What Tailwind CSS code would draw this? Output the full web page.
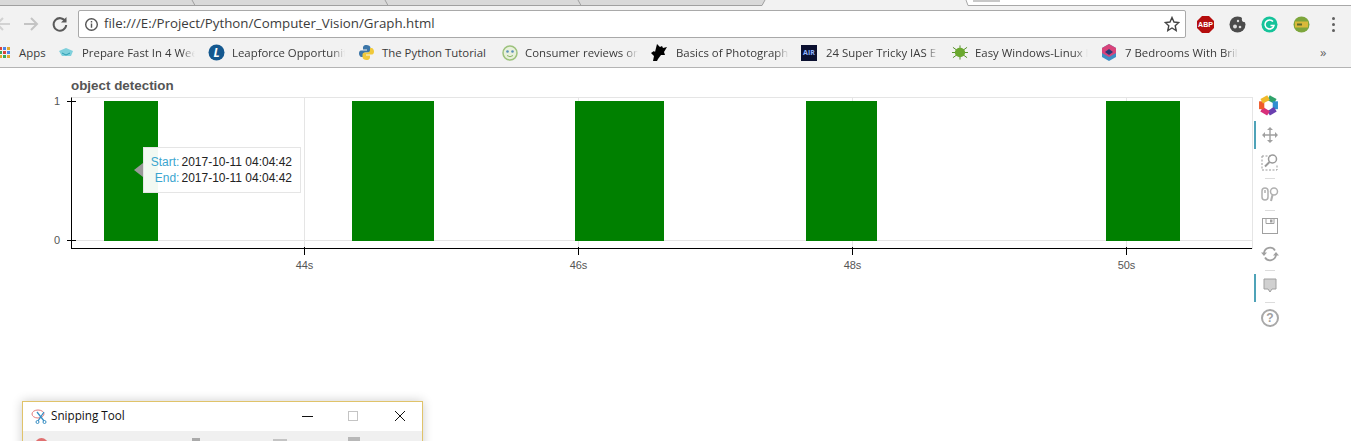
<!DOCTYPE html>
<html lang="en">
<head>
<meta charset="UTF-8">
<title>Graph</title>
<script src="https://cdn.jsdelivr.net/npm/@tailwindcss/browser@4"></script>
</head>
<body class="relative w-[1351px] h-[441px] overflow-hidden bg-white font-['Liberation_Sans',sans-serif]">

<!-- tab strip -->
<div class="relative h-[6px] bg-[#f2f2f2]">
  <svg class="absolute left-0 top-0 w-[1351px] h-[6px]" viewBox="0 0 1351 6" fill="none">
    <path d="M0 0H765L762 5.500H0z" fill="#d9d9d9"/>
    <path d="M762 5.500H0M765 0l-3 5.500M192 0l3 5.500M385 0l3 5.500M578 0l3 5.500" stroke="#a0a0a0"/>
    <path d="M966 0l2 5.500H1351V0z" fill="#fff"/>
    <path d="M966 0l2 5.500H1351" stroke="#a8a8a8"/>
    <rect x="973" y="0" width="27" height="2" fill="#c8c8c8"/>
  </svg>
</div>

<!-- toolbar -->
<div class="flex items-center h-[32px] pt-[4px] bg-[#f2f2f2]">
  <svg class="ml-[-6px] w-[18px] h-[18px] shrink-0" viewBox="0 0 18 18" fill="none" stroke="#d2d2d2" stroke-width="2"><path d="M16 9H3M9 3 3 9l6 6"/></svg>
  <svg class="ml-[10px] w-[18px] h-[18px] shrink-0" viewBox="0 0 18 18" fill="none" stroke="#c4c4c4" stroke-width="2"><path d="M2 9h13M9 3l6 6-6 6"/></svg>
  <svg class="ml-[11px] w-[18px] h-[18px] shrink-0" viewBox="0 0 18 18" fill="none" stroke="#5a5a5a" stroke-width="2"><path d="M14.500 6.500A6.300 6.300 0 1 0 15.200 10"/><path d="M15.500 2v5.500h-5.500" fill="#5a5a5a" stroke="none"/></svg>
  <div class="ml-[9px] flex items-center w-[1108px] h-[28px] bg-white border border-[#a9a9a9] rounded-[2px]">
    <svg class="ml-[5px] w-[15px] h-[15px] shrink-0" viewBox="0 0 16 16" fill="none" stroke="#555" stroke-width="1.500"><circle cx="8" cy="8" r="6.200"/><path d="M8 7v4.500M8 4.200v1.600"/></svg>
    <span class="ml-[5px] text-[13.300px] text-[#3c3c3c] font-['Open_Sans',sans-serif] whitespace-nowrap">file:///E:/Project/Python/Computer_Vision/Graph.html</span>
    <svg class="ml-auto mr-[5px] w-[16px] h-[16px] shrink-0" viewBox="0 0 16 16" fill="none" stroke="#444" stroke-width="1.400"><path d="M8 1.500 10 6l4.800.5-3.600 3.200 1 4.800L8 12l-4.200 2.500 1-4.800L1.200 6.500 6 6z"/></svg>
  </div>
  <svg class="ml-[11px] w-[17px] h-[17px] shrink-0" viewBox="0 0 17 17"><path d="M5 0h7l5 5v7l-5 5H5l-5-5V5z" fill="#b50d0d"/><text x="8.500" y="11" font-size="7" font-weight="700" fill="#fff" text-anchor="middle">ABP</text></svg>
  <svg class="ml-[15px] w-[17px] h-[17px] shrink-0" viewBox="0 0 17 17"><circle cx="8.500" cy="8.500" r="8" fill="#4c4c4c"/><circle cx="6" cy="10.500" r="2" fill="#ddd"/><circle cx="11" cy="11" r="1.300" fill="#ddd"/><circle cx="9" cy="5" r="1.200" fill="#ddd"/><circle cx="16" cy="3" r="3.200" fill="#f2f2f2"/></svg>
  <svg class="ml-[15px] w-[17px] h-[17px] shrink-0" viewBox="0 0 17 17" fill="none"><circle cx="8.500" cy="8.500" r="8" fill="#15c39a"/><path d="M12 5.500A4.500 4.500 0 1 0 13 9.500H9.500" stroke="#fff" stroke-width="1.500"/></svg>
  <svg class="ml-[15px] w-[17px] h-[17px] shrink-0" viewBox="0 0 17 17"><circle cx="8.500" cy="8.500" r="8" fill="#7da63c"/><rect x="2" y="5.500" width="13" height="6" fill="#d9b93a"/><rect x="4" y="7.500" width="5" height="2" fill="#5c6b2c"/></svg>
  <div class="ml-[22px] flex flex-col gap-[3px]"><i class="w-[3px] h-[3px] rounded-full bg-[#606060]"></i><i class="w-[3px] h-[3px] rounded-full bg-[#606060]"></i><i class="w-[3px] h-[3px] rounded-full bg-[#606060]"></i></div>
</div>

<!-- bookmarks -->
<div class="flex items-center h-[30px] bg-[#f2f2f2] border-b border-[#b4b4b4] text-[11.400px] text-[#3a3a3a] font-['Open_Sans',sans-serif] whitespace-nowrap">
  <div class="ml-[-1px] grid grid-cols-3 gap-px w-[11px] shrink-0">
    <i class="h-[3px] bg-[#d9453a]"></i><i class="h-[3px] bg-[#4b84e8]"></i><i class="h-[3px] bg-[#e0a92e]"></i>
    <i class="h-[3px] bg-[#3aa757]"></i><i class="h-[3px] bg-[#d9453a]"></i><i class="h-[3px] bg-[#4b84e8]"></i>
    <i class="h-[3px] bg-[#e0a92e]"></i><i class="h-[3px] bg-[#3aa757]"></i><i class="h-[3px] bg-[#e0a92e]"></i>
  </div>
  <span class="ml-[9px] w-[39px] shrink-0">Apps</span>
  <svg class="w-[16px] h-[16px] shrink-0" viewBox="0 0 16 16"><path d="M1 6 8 3l7 3-2 5H4z" fill="#7fd0dc"/><path d="M4 8l4 2 4-2" fill="none" stroke="#2b9db3"/></svg>
  <span class="ml-[8px] w-[113px] shrink-0 [mask-image:linear-gradient(to_right,black_88%,transparent)]">Prepare Fast In 4 Wee</span>
  <svg class="ml-[13px] w-[17px] h-[17px] shrink-0" viewBox="0 0 17 17"><circle cx="8.500" cy="8.500" r="8" fill="#14588f"/><text x="8.500" y="13" font-size="12" font-weight="700" font-style="italic" fill="#fff" text-anchor="middle">L</text></svg>
  <span class="ml-[7px] w-[113px] shrink-0 [mask-image:linear-gradient(to_right,black_88%,transparent)]">Leapforce Opportunit</span>
  <svg class="ml-[13px] w-[17px] h-[17px] shrink-0" viewBox="0 0 17 17"><path d="M8.500 1C5.500 1 5 2.500 5 4v1.500h4V6.500H3C1.500 6.500 1 8 1 9.500S2 13 3.500 13H5v-2c0-1.500 1-2.500 2.500-2.500h3c1 0 2-1 2-2V4c0-2-2-3-4-3z" fill="#3c76a8"/><path d="M8.500 16c3 0 3.500-1.500 3.500-3v-1.500H8v-1h6c1.500 0 2-1.500 2-3s-1-3.500-2.500-3.500H12v2c0 1.500-1 2.500-2.500 2.500h-3c-1 0-2 1-2 2V13c0 2 2 3 4 3z" fill="#f0c93a"/></svg>
  <span class="ml-[7px] w-[104px] shrink-0">The Python Tutorial</span>
  <svg class="ml-[16px] w-[16px] h-[16px] shrink-0" viewBox="0 0 16 16" fill="none"><circle cx="8" cy="8" r="7" fill="#e8f0dc" stroke="#9cc27c" stroke-width="1.500"/><circle cx="5.500" cy="6.500" r="1.300" fill="#5a8fb8"/><circle cx="10.500" cy="6.500" r="1.300" fill="#5a8fb8"/><path d="M5 10.500q3 2.500 6 0" stroke="#8bb56c"/></svg>
  <span class="ml-[7px] w-[113px] shrink-0 [mask-image:linear-gradient(to_right,black_88%,transparent)]">Consumer reviews on</span>
  <svg class="ml-[13px] w-[17px] h-[17px] shrink-0" viewBox="0 0 17 17"><path d="M6 0l3 3 2-1 1 2 4-1-3 5 1 3-4 0-3 4-1 2H2l1-5-3-3 3-2 1 1z" fill="#000"/></svg>
  <span class="ml-[8px] w-[113px] shrink-0 [mask-image:linear-gradient(to_right,black_88%,transparent)]">Basics of Photograph</span>
  <div class="ml-[12px] flex items-center justify-center w-[16px] h-[16px] shrink-0 bg-[#0b1030] text-[7px] font-bold text-[#8fb4ff] leading-none">AIR</div>
  <span class="ml-[9px] w-[113px] shrink-0 [mask-image:linear-gradient(to_right,black_88%,transparent)]">24 Super Tricky IAS E</span>
  <svg class="ml-[13px] w-[16px] h-[17px] shrink-0" viewBox="0 0 17 17"><g stroke="#4e8c22"><path d="M1 3l15 11M16 3 1 14M0 8.500h17M8.500 1v15"/></g><ellipse cx="8.500" cy="8.500" rx="5.500" ry="5" fill="#6aa82e"/></svg>
  <span class="ml-[7px] w-[113px] shrink-0 [mask-image:linear-gradient(to_right,black_88%,transparent)]">Easy Windows-Linux I</span>
  <svg class="ml-[13px] w-[16px] h-[17px] shrink-0" viewBox="0 0 16 17"><path d="M8 0l7 4v9l-7 4-7-4V4z" fill="#3f8fc4"/><path d="M8 0l7 4v5L8 13 1 9V4z" fill="#d8437a"/><path d="M8 5l4 3-4 3-4-3z" fill="#283a78"/></svg>
  <span class="ml-[8px] w-[113px] shrink-0 [mask-image:linear-gradient(to_right,black_88%,transparent)]">7 Bedrooms With Bril</span>
  <span class="ml-[82px] text-[13px] text-[#666]">»</span>
</div>

<!-- plot -->
<div class="relative h-[373px]">
  <div class="absolute left-[71px] top-[9px] text-[13.400px] font-bold text-[#555] leading-[18px]">object detection</div>

  <!-- plot frame -->
  <div class="absolute left-[71px] top-[29px] w-[1181px] h-[152px] border-l border-b border-l-black border-b-black border-t border-t-[#e5e5e5]"></div>
  <div class="absolute left-[72px] top-[172px] w-[1180px] h-px bg-[#e5e5e5]"></div>
  <div class="absolute left-[304px] top-[30px] w-px h-[150px] bg-[#e5e5e5]"></div>
  <div class="absolute left-[578px] top-[30px] w-px h-[150px] bg-[#e5e5e5]"></div>
  <div class="absolute left-[852px] top-[30px] w-px h-[150px] bg-[#e5e5e5]"></div>
  <div class="absolute left-[1126px] top-[30px] w-px h-[150px] bg-[#e5e5e5]"></div>
  <div class="absolute left-[1252px] top-[29px] w-px h-[152px] bg-[#e5e5e5]"></div>

  <!-- bars -->
  <div class="absolute left-[104px] top-[33px] w-[54px] h-[140px] bg-[#008000]"></div>
  <div class="absolute left-[352px] top-[33px] w-[82px] h-[140px] bg-[#008000]"></div>
  <div class="absolute left-[575px] top-[33px] w-[89px] h-[140px] bg-[#008000]"></div>
  <div class="absolute left-[806px] top-[33px] w-[71px] h-[140px] bg-[#008000]"></div>
  <div class="absolute left-[1106px] top-[33px] w-[74px] h-[140px] bg-[#008000]"></div>

  <!-- y ticks -->
  <div class="absolute left-[67px] top-[33px] w-[9px] h-px bg-black"></div>
  <div class="absolute left-[67px] top-[172px] w-[9px] h-px bg-black"></div>
  <div class="absolute left-[48px] top-[27px] w-[12px] text-right text-[11px] leading-[13px] text-[#555]">1</div>
  <div class="absolute left-[48px] top-[166px] w-[12px] text-right text-[11px] leading-[13px] text-[#555]">0</div>

  <!-- x ticks -->
  <div class="absolute left-[304px] top-[179px] w-px h-[8px] bg-black"></div>
  <div class="absolute left-[578px] top-[179px] w-px h-[8px] bg-black"></div>
  <div class="absolute left-[852px] top-[179px] w-px h-[8px] bg-black"></div>
  <div class="absolute left-[1126px] top-[179px] w-px h-[8px] bg-black"></div>
  <div class="absolute left-[284px] top-[191px] w-[41px] text-center text-[11px] leading-[13px] text-[#555]">44s</div>
  <div class="absolute left-[558px] top-[191px] w-[41px] text-center text-[11px] leading-[13px] text-[#555]">46s</div>
  <div class="absolute left-[832px] top-[191px] w-[41px] text-center text-[11px] leading-[13px] text-[#555]">48s</div>
  <div class="absolute left-[1106px] top-[191px] w-[41px] text-center text-[11px] leading-[13px] text-[#555]">50s</div>

  <!-- hover tooltip -->
  <div class="absolute left-[134px] top-[95px] w-0 h-0 border-y-[7px] border-y-transparent border-r-[9px] border-r-[#9a9a9a]"></div>
  <div class="absolute left-[143px] top-[79px] w-[158px] h-[46px] bg-white/95 border border-[#e5e5e5] pt-[6px] pr-[8px] text-[12px] leading-[16px] grid grid-cols-[auto_auto] justify-end content-start gap-x-[2px]">
    <span class="text-right text-[#3ba5cf]">Start:</span><span class="text-[#222]">2017-10-11 04:04:42</span>
    <span class="text-right text-[#3ba5cf]">End:</span><span class="text-[#222]">2017-10-11 04:04:42</span>
  </div>

  <!-- bokeh toolbar -->
  <div class="absolute left-[1254px] top-[27px] w-[32px] flex flex-col items-center">
    <svg class="mr-[4px] w-[21px] h-[21px]" viewBox="0 0 20 20" fill="none" stroke-width="5"><path d="M10 2.500 16.500 6" stroke="#2fa36a"/><path d="M16.500 6V13.500" stroke="#2f8fd0"/><path d="M16.500 13.500 10 17.500" stroke="#6a3fb0"/><path d="M10 17.500 3.500 13.500" stroke="#d8307a"/><path d="M3.500 13.500V6" stroke="#ef5a2a"/><path d="M3.500 6 10 2.500" stroke="#f0b92a"/></svg>
    <div class="relative mt-[5px] flex items-center justify-center w-[32px] h-[28px] pb-[1px]">
      <span class="absolute left-0 top-0 w-[2px] h-[28px] bg-[#4fa3b8]"></span>
      <svg class="w-[16px] h-[16px]" viewBox="0 0 16 16" fill="#a0a0a0"><path d="M7.300 3h1.400v4.300H13V8.700H8.700V13H7.300V8.700H3V7.300h4.300z"/><path d="M8 0l3 3H5zM8 16l-3-3h6zM0 8l3-3v6zM16 8l-3 3V5z"/></svg>
    </div>
    <div class="flex items-center justify-center w-[32px] h-[29px] pb-[3px]">
      <svg class="w-[18px] h-[18px]" viewBox="0 0 18 18" fill="none" stroke="#9a9a9a"><path d="M1 3h9M1 3v14h15v-5" stroke-dasharray="2 1.500"/><circle cx="11.500" cy="6" r="4" stroke-width="1.500"/><path d="M8.500 9 4 13.500" stroke-width="2"/></svg>
    </div>
    <div class="w-[10px] h-px bg-[#dcdcdc]"></div>
    <div class="flex items-center justify-center w-[32px] h-[31px] pb-[2px]">
      <svg class="w-[18px] h-[16px]" viewBox="0 0 18 16" fill="none" stroke="#b0b0b0" stroke-width="1.500"><rect x="1" y="2" width="6" height="12" rx="3"/><path d="M4 4v3"/><circle cx="13" cy="5.500" r="3.500"/><path d="M11.500 9 10 15" stroke-width="2"/></svg>
    </div>
    <div class="w-[10px] h-px bg-[#dcdcdc]"></div>
    <div class="flex items-center justify-center w-[32px] h-[30px] pb-[1px]">
      <svg class="w-[16px] h-[16px]" viewBox="0 0 16 16" fill="none" stroke="#a0a0a0"><rect x="0.500" y="0.500" width="15" height="15"/><path d="M4 .5v5h8v-5"/><rect x="8.500" y="2" width="1.500" height="2" fill="#a0a0a0"/></svg>
    </div>
    <div class="flex items-center justify-center w-[32px] h-[29px] pb-[3px]">
      <svg class="w-[18px] h-[16px]" viewBox="0 0 18 16" fill="none" stroke="#a0a0a0" stroke-width="1.800"><path d="M3 7a6 6 0 0 1 11-2.500M15 9a6 6 0 0 1-11 2.500"/><path d="M0 6.500h6L3 10zM18 9.500h-6L15 6z" fill="#a0a0a0" stroke="none"/></svg>
    </div>
    <div class="w-[10px] h-px bg-[#dcdcdc]"></div>
    <div class="relative mt-[3px] flex items-center justify-center w-[32px] h-[28px] pb-[4px]">
      <span class="absolute left-0 top-0 w-[2px] h-[28px] bg-[#4fa3b8]"></span>
      <svg class="w-[14px] h-[16px]" viewBox="0 0 14 16" fill="#d0d0d0" stroke="#a0a0a0"><path d="M1 1h12v10H9l-2 3-2-3H1z"/></svg>
    </div>
    <div class="w-[10px] h-px bg-[#dcdcdc]"></div>
    <div class="mt-[6px] flex items-center justify-center w-[18px] h-[18px] rounded-full border-2 border-[#a8a8a8] text-[12px] font-bold leading-none text-[#a0a0a0]">?</div>
  </div>
</div>

<!-- snipping tool window, sits over the desktop -->
<div class="absolute left-[22px] top-[401px] w-[401px] h-[60px] bg-white border border-[#e0c36a] shadow-[0_0_10px_rgba(0,0,0,0.2)] font-['Open_Sans',sans-serif]">
  <div class="flex items-center h-[29px]">
    <svg class="ml-[8px] w-[17px] h-[17px] shrink-0" viewBox="0 0 17 17" fill="none"><ellipse cx="7" cy="6" rx="6" ry="4" stroke="#e27a7a"/><path d="M6 4l7 9M13 4l-6 9" stroke="#3a8fc4" stroke-width="1.300"/><circle cx="6.500" cy="14" r="1.500" stroke="#3a8fc4"/><circle cx="13.500" cy="14" r="1.500" stroke="#3a8fc4"/></svg>
    <span class="ml-[3px] w-[73px] text-[11.700px] leading-[16px] mt-[-3px] text-[#111] whitespace-nowrap">Snipping Tool</span>
    <svg class="ml-[177px] w-[12px] h-[12px] mt-[-2px] shrink-0" viewBox="0 0 12 12" stroke="#111"><path d="M1 6.500h11"/></svg>
    <div class="ml-[35px] w-[10px] h-[10px] mt-[-2px] border border-[#c4c4c4] shrink-0"></div>
    <svg class="ml-[36px] w-[12px] h-[12px] mt-[-2px] shrink-0" viewBox="0 0 12 12" stroke="#111" fill="none"><path d="M1 1l10 10M11 1 1 11"/></svg>
  </div>
  <div class="relative h-[30px] bg-[#f0f0f0]">
    <div class="absolute left-[12px] top-[7px] w-[13px] h-[13px] rounded-full bg-[#e07070]"></div>
    <div class="absolute left-[169px] top-[7px] w-[8px] h-[3px] bg-[#aaa]"></div>
    <div class="absolute left-[250px] top-[8px] w-[14px] h-[2px] bg-[#c4c4c4]"></div>
    <div class="absolute left-[325px] top-[6px] w-[12px] h-[4px] bg-[#b8b8b8]"></div>
  </div>
</div>

</body>
</html>
